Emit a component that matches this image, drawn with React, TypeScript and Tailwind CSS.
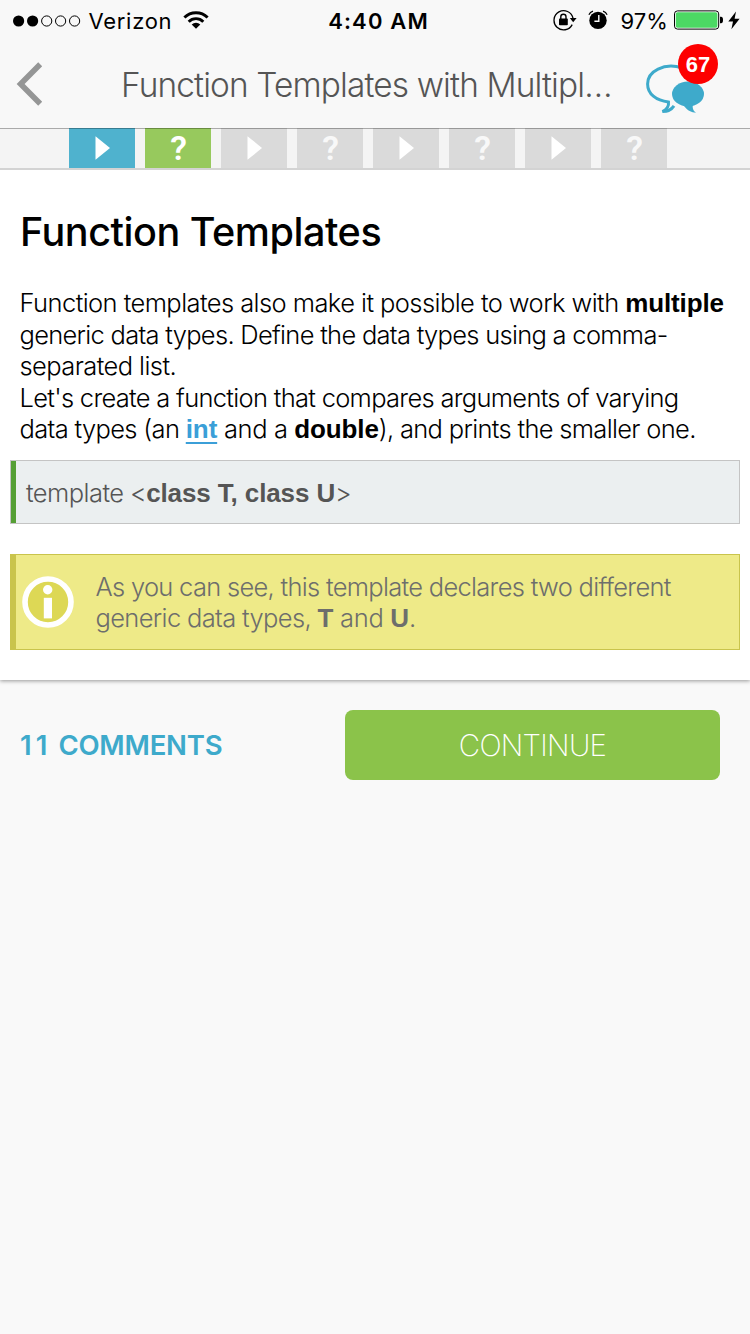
import type { ReactNode } from "react";

const SANS = "font-['Inter','Liberation_Sans',sans-serif]";

function B({ children, className = "" }: { children: ReactNode; className?: string }) {
  return (
    <b className={"font-['Liberation_Sans',sans-serif] text-[26px] font-bold tracking-[-0.12px] " + className}>
      {children}
    </b>
  );
}

function Line({ children, className = "" }: { children: ReactNode; className?: string }) {
  return <div className={"h-[31.5px] leading-[31.5px] whitespace-pre " + className}>{children}</div>;
}

function StatusBar() {
  return (
    <div className="flex h-10 items-center justify-between pr-[9px] pl-[13px] text-[22px] leading-10 text-black">
      <div className="flex w-[300px] items-center">
        <svg width="68" height="12" viewBox="0 0 68 12" className="mt-px">
          <circle cx="5.6" cy="6" r="5.6" />
          <circle cx="19.6" cy="6" r="5.6" />
          <g fill="none" stroke="#000" strokeWidth="1">
            <circle cx="33.7" cy="6" r="5.1" />
            <circle cx="47.6" cy="6" r="5.1" />
            <circle cx="61.6" cy="6" r="5.1" />
          </g>
        </svg>
        <span className="mt-px ml-[7.5px] tracking-[0.7px]">Verizon</span>
        <svg width="26" height="18" viewBox="0 0 26 18" className="ml-[11px]">
          <g fill="none" stroke="#000" strokeWidth="2.9">
            <path d="M1.4 6.6 A16.2 16.2 0 0 1 24.6 6.6" />
            <path d="M5.7 10.7 A10.3 10.3 0 0 1 20.3 10.7" />
          </g>
          <path d="M13 17.8 L8.7 13.6 A6.2 6.2 0 0 1 17.3 13.6 Z" />
        </svg>
      </div>
      <span className="mt-px ml-[3px] font-semibold tracking-[1.15px]">4:40 AM</span>
      <div className="flex w-[300px] items-center justify-end">
        <svg width="24" height="22" viewBox="0 0 24 22">
          <path d="M19.2 15.6 A9.6 9.6 0 1 1 20 9.2" fill="none" stroke="#000" strokeWidth="1.3" />
          <path d="M16.8 9 H23.6 L20.2 13.2 Z" />
          <rect x="6" y="9.6" width="8.8" height="6.6" rx="0.8" />
          <path d="M7.8 10 V7.8 A2.6 2.6 0 0 1 13 7.8 V10" fill="none" stroke="#000" strokeWidth="1.4" />
        </svg>
        <svg width="20" height="20" viewBox="0 0 20 20" className="ml-[11.5px]">
          <circle cx="10" cy="10.4" r="8.7" />
          <path d="M0.9 4.8 A6 6 0 0 1 5 1.2 M19.1 4.8 A6 6 0 0 0 15 1.2" fill="none" stroke="#000" strokeWidth="1.2" />
          <path d="M10.8 5 V11.2 H6.4" fill="none" stroke="#fff" strokeWidth="1.4" />
        </svg>
        <span className="mt-px ml-[12px] w-[53.5px] tracking-[0.1px]">97%</span>
        <svg width="50" height="20" viewBox="0 0 50 20">
          <rect x="0.5" y="0.9" width="44.2" height="18.2" rx="3" fill="#fff" stroke="#000" />
          <rect x="1.8" y="2.2" width="41.6" height="15.6" rx="1.8" fill="#4cd964" />
          <path d="M46 6.8 H47 A2 3.2 0 0 1 47 13.2 H46 Z" />
        </svg>
        <svg width="12" height="19" viewBox="0 0 12 19" className="mr-px ml-1">
          <path d="M8 0.5 L0.3 10.6 H5 L3.4 18.3 L11.6 7.8 H6.6 Z" />
        </svg>
      </div>
    </div>
  );
}

function NavBar() {
  return (
    <div className="flex h-[88px] items-center">
      <svg width="30" height="46" viewBox="0 0 30 46" className="ml-4 shrink-0">
        <path d="M24.2 3.2 L4.6 23 L24.2 42.8" fill="none" stroke="#959696" strokeWidth="5.6" />
      </svg>
      <h2 className="mt-0.5 ml-[75px] w-[519px] shrink-0 text-[33.4px] font-light tracking-[-0.86px] whitespace-pre text-[#555]">
        Function Templates with Multipl…
      </h2>
      <div className="relative mb-2 h-[72px] w-[80px] shrink-0">
        <svg width="80" height="72" viewBox="640 44 80 72">
          <path
            d="M682 67.8 C664 62.5 647.6 71 647.6 84 C647.6 94 656 100.6 668.5 102 C669 106 666.5 109.5 662.5 111.6 C668 111.5 671.5 109.5 674 105.8"
            fill="none"
            stroke="#3eaacb"
            strokeWidth="3"
          />
          <ellipse cx="688" cy="94" rx="16" ry="12.5" fill="#3eaacb" />
          <path d="M682 104 C686 107 686 111.5 696 112.8 C692.5 110 692 107 693.5 103 Z" fill="#3eaacb" />
        </svg>
        <span className="absolute top-0 left-[38px] flex h-10 w-10 items-center justify-center rounded-full bg-[#fd0000] font-['Liberation_Sans',sans-serif] text-[22px] font-bold text-white">
          67
        </span>
      </div>
    </div>
  );
}

const steps = [
  { quiz: false, color: "bg-[#4fb2ce]", icon: "text-white" },
  { quiz: true, color: "bg-[#97c95d]", icon: "text-white" },
  { quiz: false, color: "bg-[#dadada]", icon: "text-white" },
  { quiz: true, color: "bg-[#dadada]", icon: "text-[#f8f8f8]" },
  { quiz: false, color: "bg-[#dadada]", icon: "text-white" },
  { quiz: true, color: "bg-[#dadada]", icon: "text-[#f8f8f8]" },
  { quiz: false, color: "bg-[#dadada]", icon: "text-white" },
  { quiz: true, color: "bg-[#dadada]", icon: "text-[#f8f8f8]" },
];

function Steps() {
  return (
    <div className="relative flex h-[42px] gap-[10px] border-b-2 border-[#d3d3d3] bg-[#f4f4f4] pl-[69px]">
      {steps.map((s, i) => (
        <div key={i} className={"flex h-10 w-[66px] items-center justify-center " + s.color + " " + s.icon}>
          {s.quiz ? (
            <span className="ml-px font-['Roboto',sans-serif] text-[34px] leading-10 font-semibold">?</span>
          ) : (
            <svg width="16" height="26" viewBox="0 0 16 26" className="ml-0.5">
              <path d="M0.5 1.2 L15 13 L0.5 24.8 Z" fill="currentColor" />
            </svg>
          )}
        </div>
      ))}
      <div className="absolute inset-x-0 top-0 h-px bg-black/30" />
    </div>
  );
}

export default function App() {
  return (
    <div className={"flex h-[1334px] w-[750px] flex-col overflow-hidden bg-[#f9f9f9] " + SANS}>
      <header className="bg-[#f8f8f8]">
        <StatusBar />
        <NavBar />
      </header>
      <Steps />
      <main className="h-[510px] bg-white px-[10px] pt-[38px] shadow-[0_1px_4px_rgba(0,0,0,0.4)]">
        <h1 className="h-12 px-[10px] text-[39.6px] leading-[48px] font-medium tracking-[-0.48px] text-black">
          Function Templates
        </h1>
        <div className="mt-[31px] px-[9.5px] text-[25.5px] font-light text-black">
          <Line>
            <span className="tracking-[-0.57px]">Function templates also make it possible to work with </span>
            <B>multiple</B>
          </Line>
          <Line className="tracking-[-0.71px]">generic data types. Define the data types using a comma-</Line>
          <Line className="tracking-[-0.58px]">separated list.</Line>
          <Line className="tracking-[-0.7px]">Let's create a function that compares arguments of varying</Line>
          <Line>
            <span className="tracking-[-0.66px]">data types (an </span>
            <B className="text-[#3b9fd8] underline decoration-2 underline-offset-4">int</B>
            <span className="tracking-[-0.4px]"> and a </span>
            <B>double</B>
            <span className="tracking-[-0.68px]">), and prints the smaller one.</span>
          </Line>
        </div>
        <div className="mt-[15.5px] flex h-16 items-center border border-[#c4c4c4] bg-[#ebeff0] text-[25.5px] font-light text-[#555]">
          <div className="mr-[10px] h-full w-[5px] bg-[#559f35]" />
          <Line className="mt-0.5">
            <span className="tracking-[-0.56px]">template &lt;</span>
            <B className="tracking-[-0.06px]">class T, class U</B>&gt;
          </Line>
        </div>
        <div className="mt-[30px] flex h-24 items-center border border-l-[6px] border-[#c9c44c] bg-[#eeea88] text-[25.5px] font-light text-[#6d6e6c]">
          <svg width="54" height="54" viewBox="0 0 54 54" className="ml-[5px]">
            <circle cx="27" cy="27" r="23" fill="#ddd855" stroke="#fff" strokeWidth="5.6" />
            <circle cx="26.7" cy="14.7" r="4.7" fill="#fff" />
            <rect x="22.8" y="22.8" width="8.2" height="20.6" fill="#fff" />
          </svg>
          <div className="ml-[20.5px]">
            <Line className="tracking-[-0.7px]">As you can see, this template declares two different</Line>
            <Line>
              <span className="tracking-[-0.65px]">generic data types, </span>
              <B>T</B>
              <span className="tracking-[-0.36px]"> and </span>
              <B>U</B>.
            </Line>
          </div>
        </div>
      </main>
      <footer className="mt-[30px] flex h-[70px] items-center justify-between pr-[30px] pl-5">
        <span className="mt-0.5 text-[27.5px] font-semibold whitespace-pre text-[#3eaacb]">
          <span className="tracking-[4px]">11</span>
          <span className="tracking-[0.2px]"> </span>
          <span className="tracking-[-0.22px]">COMMENTS</span>
        </span>
        <button className="h-[70px] w-[375px] rounded-lg bg-[#8bc34a] pt-0.5 text-[29.4px] font-extralight tracking-[-0.7px] text-white">
          CONTINUE
        </button>
      </footer>
    </div>
  );
}
